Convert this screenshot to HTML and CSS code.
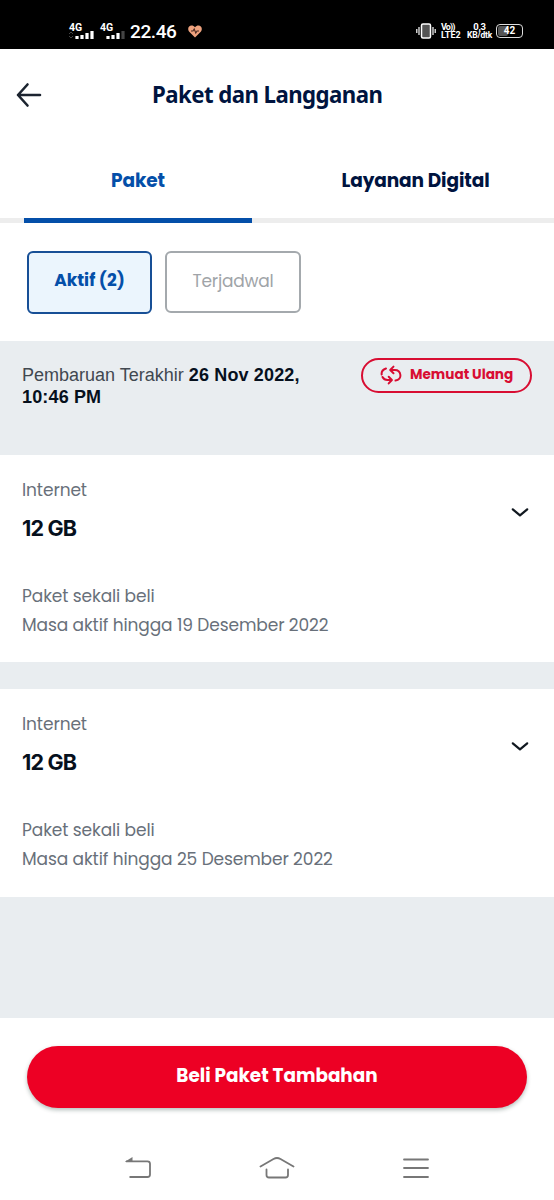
FILE: index.html
```html
<!DOCTYPE html>
<html lang="id">
<head>
<meta charset="utf-8">
<title>Paket dan Langganan</title>
<link rel="stylesheet" href="styles.css">
</head>
<body>
<div class="screen">
  <div class="status">
    <div class="sim sim-first"><span>4G</span>
      <svg width="26" height="10" viewBox="0 0 26 10"><path d="M0 4l2-2 2 2M0 6l2 2 2-2" fill="none" stroke="#444"/><path d="M8 9V6M13 9V5M18 9V3M23 9V1" stroke="#fff" stroke-width="3.2"/></svg>
    </div>
    <div class="sim"><span>4G</span>
      <svg width="26" height="10" viewBox="0 0 26 10"><path d="M8 9V6M13 9V5M18 9V3" stroke="#fff" stroke-width="3.2"/><path d="M23 9V1" stroke="#444" stroke-width="3.2"/></svg>
    </div>
    <span class="clock">22.46</span>
    <svg class="heart" width="14" height="13" viewBox="0 0 14 13"><path d="M7 12.5L1 6.500C-1 3.500 1 .5 3.500.5 5 .5 6 1 7 2.300 8 1 9 .5 10.500.5 13 .5 15 3.500 13 6.500z" fill="#eea27e"/><path d="M3 6h2l1.200-2 1.600 4L9 6h2" fill="none" stroke="#4b2a21" stroke-width="1.100"/></svg>
    <svg class="vibrate" width="20" height="16" viewBox="0 0 20 16"><rect x="5.500" y="1" width="9" height="14" rx="1.500" fill="#555" stroke="#fff" stroke-width="1.500"/><path d="M3 4v8M.8 6v4M17 4v8M19.200 6v4" stroke="#fff" stroke-width="1.200"/></svg>
    <div class="stack volte"><span class="vo">Vo))</span><span>LTE2</span></div>
    <div class="stack speed"><span class="rate">0,3</span><span>KB/dtk</span></div>
    <div class="battery"><i></i><span>42</span></div>
  </div>

  <header class="header">
    <svg class="back" width="26" height="26" viewBox="0 0 26 26"><path d="M24 13H2M11.500 2.500L2 13l9.500 10.500" fill="none" stroke="#1c2430" stroke-width="2.600" stroke-linecap="round" stroke-linejoin="round"/></svg>
    <h1 class="title">Paket dan Langganan</h1>
  </header>

  <nav class="tabs">
    <a class="tab active">Paket</a>
    <a class="tab">Layanan Digital</a>
  </nav>

  <div class="filters">
    <button class="chip on">Aktif (2)</button>
    <button class="chip off">Terjadwal</button>
  </div>

  <section class="update">
    <p class="updated"><span>Pembaruan Terakhir</span> <b>26 Nov 2022,</b><br><b>10:46 PM</b></p>
    <button class="reload">
      <svg width="22" height="20" viewBox="0 0 22 20" fill="none" stroke="#d80d32" stroke-width="2" stroke-linecap="round" stroke-linejoin="round"><path d="M6 3.500C3 4.500 1.300 7 1.700 9.500"/><path d="M2.500 12c1 2 2.500 3 5 3H11.500M8.700 11.800l3.200 3.200-3.200 3.400"/><path d="M15.500 15.500c3.500-.5 5.200-3 4.900-5.500C20 7 17.700 5 14.800 5H10.500M13.500 1.600L10.200 5l3.300 3.300"/></svg>
      <span>Memuat Ulang</span>
    </button>
  </section>

  <article class="card">
    <div class="info">
      <p class="kind">Internet</p>
      <h2 class="quota">12 GB</h2>
      <p class="line">Paket sekali beli</p>
      <p class="line">Masa aktif hingga 19 Desember 2022</p>
    </div>
    <svg class="chevron" width="18" height="11" viewBox="0 0 18 11"><path d="M1.800 2.300L9 8.300l7.200-6" fill="none" stroke="#111820" stroke-width="2.200" stroke-linecap="round" stroke-linejoin="round"/></svg>
  </article>

  <article class="card second">
    <div class="info">
      <p class="kind">Internet</p>
      <h2 class="quota">12 GB</h2>
      <p class="line">Paket sekali beli</p>
      <p class="line">Masa aktif hingga 25 Desember 2022</p>
    </div>
    <svg class="chevron" width="18" height="11" viewBox="0 0 18 11"><path d="M1.800 2.300L9 8.300l7.200-6" fill="none" stroke="#111820" stroke-width="2.200" stroke-linecap="round" stroke-linejoin="round"/></svg>
  </article>

  <footer class="bottom">
    <button class="buy">Beli Paket Tambahan</button>
    <div class="sysnav">
      <svg width="28" height="24" viewBox="0 0 28 24"><path d="M1 5.300H22.500Q25 5.300 25 7.800V18.500Q25 21 22.500 21H4.500" fill="none" stroke="#777" stroke-width="1.800"/><path d="M-.5 6l8-5v5z" fill="#777"/></svg>
      <svg width="36" height="24" viewBox="0 0 36 24"><path d="M1.500 10.500L14.500 3Q18 1 21.500 3L34.500 10.500M7.500 13.500V19Q7.500 21.500 10 21.500H26.500Q29 21.500 29 19V13.500" fill="none" stroke="#777" stroke-width="1.800" stroke-linecap="round"/></svg>
      <svg width="26" height="24" viewBox="0 0 26 24"><path d="M1 3.500H25M1 12H25M1 21H25" stroke="#777" stroke-width="1.800" stroke-linecap="round"/></svg>
    </div>
  </footer>
</div>
</body>
</html>
```
FILE: styles.css
```css
* { box-sizing: border-box; }
body { margin: 0; }
p, h1, h2 { margin: 0; }
button { border: 0; background: none; padding: 0; font: inherit; }
svg { display: block; flex: none; }
.screen { width: 554px; height: 1200px; background: #e9edf0; font-family: Poppins, Inter, "Noto Sans", sans-serif; color: #00143f; overflow: hidden; white-space: nowrap; display: flex; flex-direction: column; }

.status { height: 49px; flex: none; background: #000; color: #fff; display: flex; align-items: flex-start; padding-left: 69px; font-family: Roboto, sans-serif; }
.sim { width: 26px; margin: 23px 5px 0 0; font-size: 10.500px; line-height: 9px; font-weight: 700; }
.sim span { display: block; height: 7px; }
.clock { width: 47px; margin: 20px 11px 0 -1px; font-size: 19px; line-height: 24px; letter-spacing: -0.4px; font-weight: 500; }
.heart { margin: 25px 0 0 0; }
.vibrate { margin: 23px 5px 0 214px; }
.stack { margin-top: 23px; font-size: 9px; line-height: 8px; font-weight: 700; display: flex; flex-direction: column; }
.volte { width: 20px; margin-right: 6px; }
.vo { letter-spacing: -0.9px; }
.speed { width: 25px; align-items: center; margin-right: 4px; font-size: 8.500px; letter-spacing: -0.2px; }
.rate { font-size: 9.500px; }
.battery { position: relative; width: 27px; height: 14px; margin-top: 24px; border: 1.500px solid #ddd; border-radius: 4px; font-size: 10px; font-weight: 700; line-height: 12px; text-align: center; }
.battery i { position: absolute; left: 1px; top: 1px; width: 10px; height: 10px; background: #555; border-radius: 2px; }
.battery span { position: relative; }

.header { height: 91px; flex: none; background: #fff; display: flex; align-items: center; padding-left: 16px; }
.title { margin: 0 0 1px 110px; font: 700 24px/32px "Noto Sans", sans-serif; letter-spacing: -0.6px; transform: scaleX(.926); transform-origin: left; }

.tabs { height: 83px; flex: none; background: #fff; display: grid; grid-template-columns: 277px 277px; border-bottom: 5px solid #ededed; }
.tab { height: 83px; padding-top: 27px; text-align: center; font-size: 18.500px; line-height: 28px; font-weight: 700; letter-spacing: -0.1px; }
.active { width: 228px; margin-left: 24px; border-bottom: 5px solid #044fa9; color: #044fa9; }

.filters { height: 118px; flex: none; background: #fff; display: flex; gap: 13px; padding: 28px 27px; }
.chip { border-radius: 6px; font-size: 17px; padding-bottom: 4px; }
.on { width: 125px; height: 63px; border: 2px solid #174f96; background: #ebf5fd; color: #044fa9; font-weight: 700; padding-bottom: 5px; }
.off { width: 136px; height: 62px; border: 2px solid #a4a9ad; color: #a0a4a8; letter-spacing: -0.2px; padding-bottom: 3px; }

.update { height: 114px; flex: none; display: flex; justify-content: space-between; align-items: flex-start; padding: 17px 22px 0; }
.updated { padding-top: 6px; font: 18px/22px "Liberation Sans", Arial, sans-serif; color: #414850; }
.updated b { color: #06101d; letter-spacing: 0.15px; }
.reload { width: 171px; height: 35px; border: 2px solid #d80d32; border-radius: 18px; color: #d80d32; display: flex; align-items: center; gap: 8px; padding: 0 0 1px 17px; font-size: 13.600px; font-weight: 700; }
.reload span { padding-bottom: 1px; }

.card { height: 207px; flex: none; background: #fff; display: flex; justify-content: space-between; align-items: flex-start; padding: 22px 25px 0 22px; font-size: 17px; letter-spacing: -0.1px; color: #68707a; }
.kind { line-height: 26px; }
.quota { margin: 9px 0 38px; font: 700 21.500px/32px Inter, sans-serif; color: #06101d; letter-spacing: -0.8px; }
.line { line-height: 29px; }
.second { margin-top: 27px; height: 208px; }
.chevron { margin-top: 30px; }

.bottom { margin-top: auto; height: 182px; flex: none; background: #fff; padding: 28px 27px 0; }
.buy { display: block; width: 500px; height: 62px; border-radius: 31px; background: #ed0024; color: #fff; font-size: 18.400px; font-weight: 700; padding-bottom: 4px; box-shadow: 0 2px 4px rgba(0,40,30,.3); }
.sysnav { display: flex; margin-top: 48px; padding-left: 98px; }
.sysnav svg:nth-child(2) { margin-left: 106px; }
.sysnav svg:nth-child(3) { margin-left: 108px; }
```
